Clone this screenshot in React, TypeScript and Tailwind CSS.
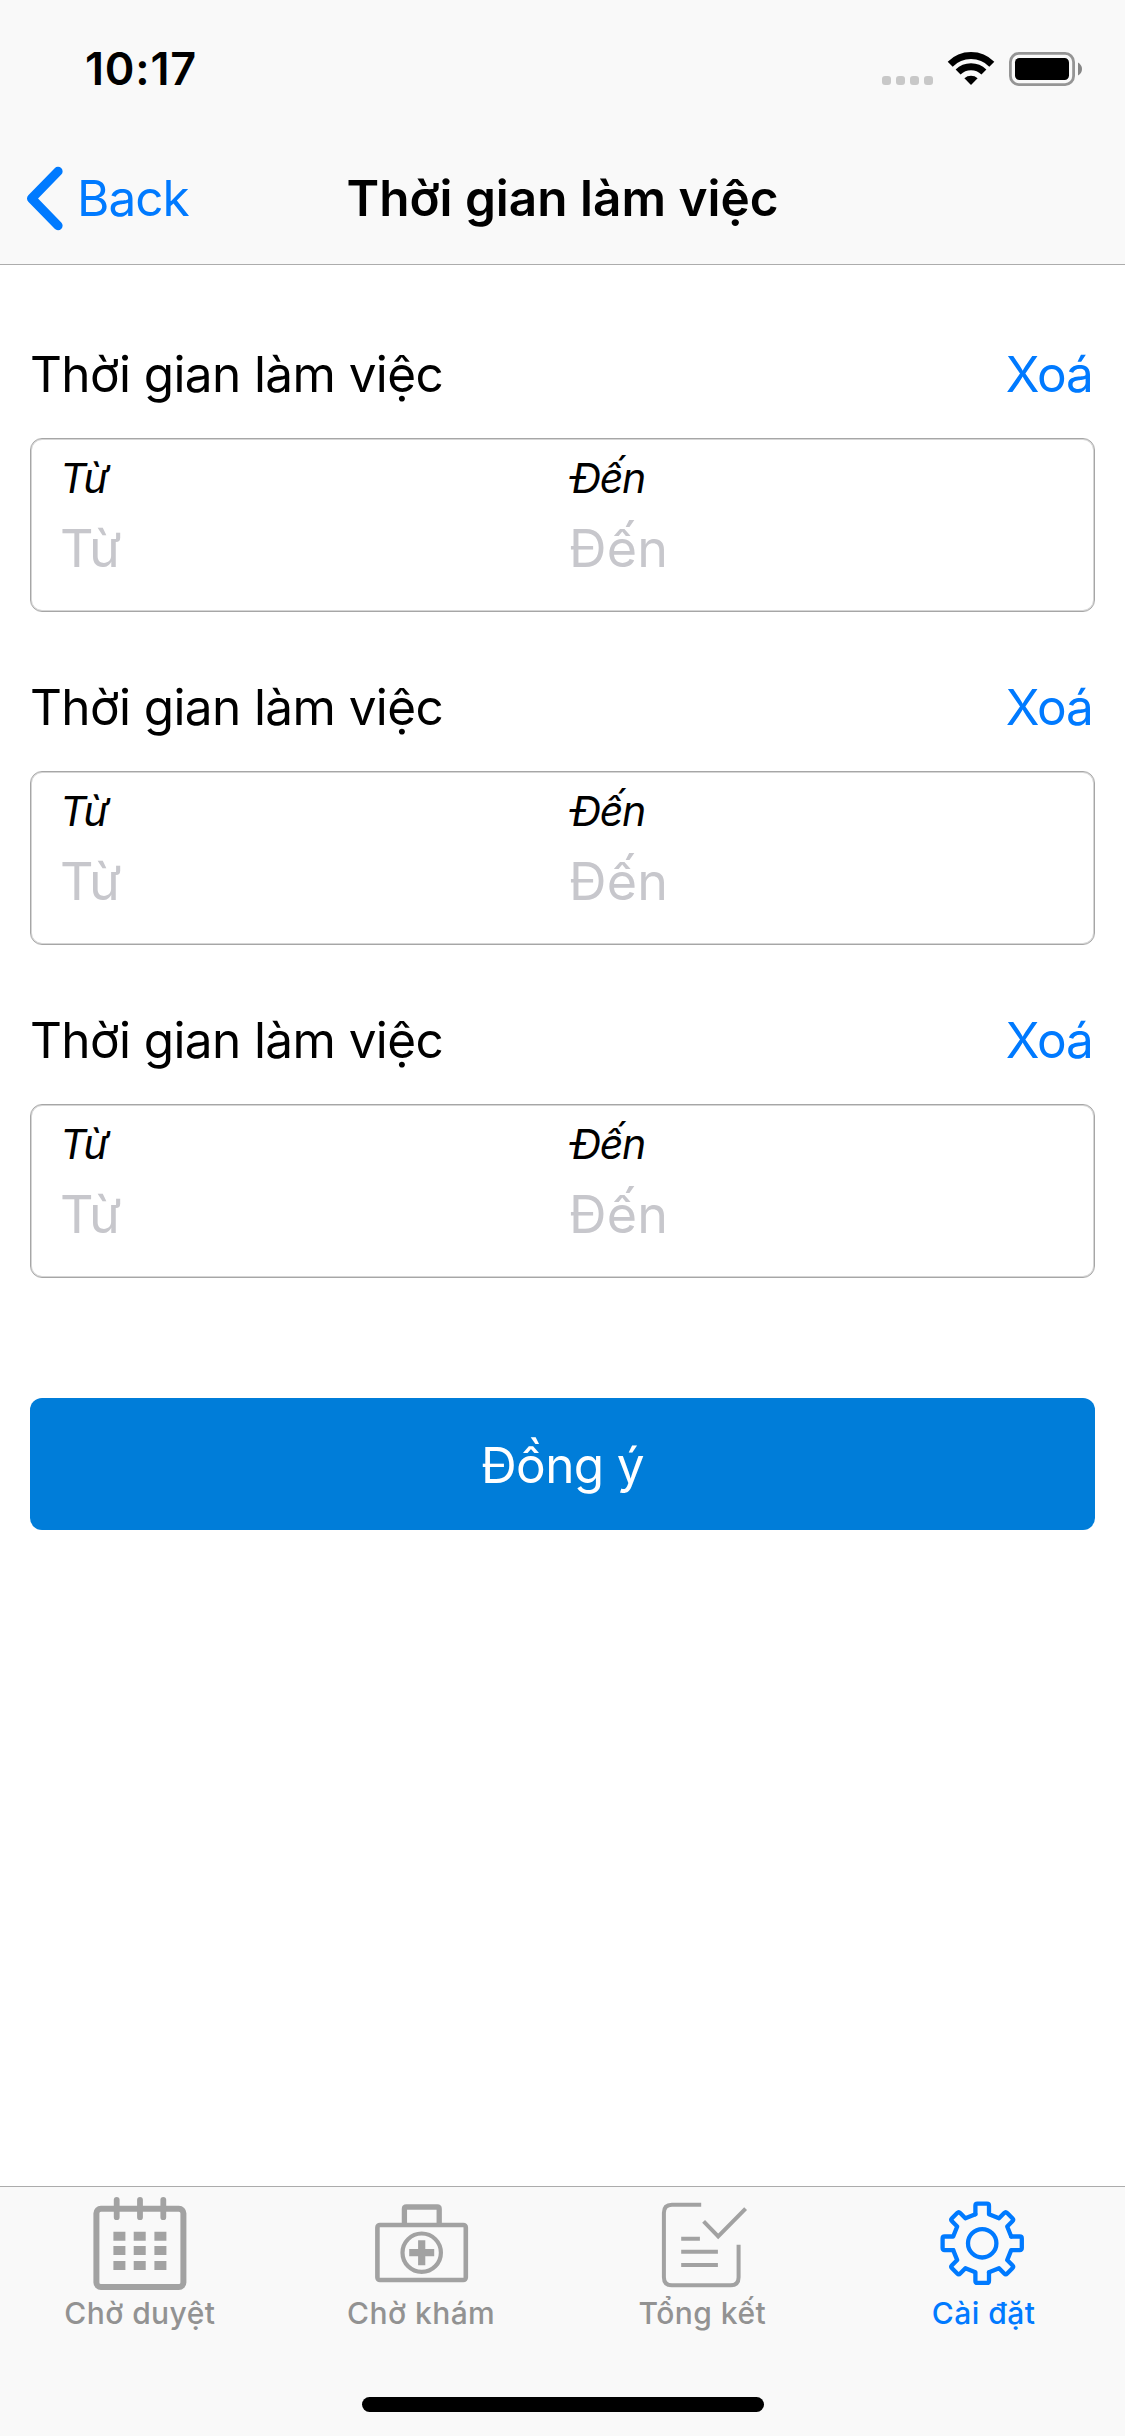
import type { ReactNode } from "react";

function StatusBar() {
  return (
    <div className="flex h-[132px] justify-between pl-[85px]">
      <span className="mt-[42px] text-[45px] leading-[54px] font-semibold tracking-[0.8px]">10:17</span>
      <svg className="mt-[48px] mr-[41px] h-[42px] w-[204px]" viewBox="0 0 204 42" fill="none">
        <g fill="#c8c8c8">
          <rect x="2" y="28" width="9" height="9" rx="3" />
          <rect x="16" y="28" width="9" height="9" rx="3" />
          <rect x="30" y="28" width="9" height="9" rx="3" />
          <rect x="44" y="28" width="9" height="9" rx="3" />
        </g>
        <g stroke="#000">
          <path d="M70.2 16.2 A29.2 29.2 0 0 1 111.8 16.2" strokeWidth="7" />
          <path d="M78.1 24.1 A18.3 18.3 0 0 1 103.9 24.1" strokeWidth="7" />
        </g>
        <path d="M84.4 30.3 A10 10 0 0 1 97.6 30.3 L91.5 36.5 Q91 37 90.5 36.5 Z" fill="#000" />
        <rect x="130.4" y="5.4" width="63.2" height="31.2" rx="8.5" stroke="#959595" strokeWidth="2.8" />
        <rect x="135" y="10" width="54" height="22" rx="4.5" fill="#000" />
        <path d="M198 14.5 Q202 17 202 21 Q202 25 198 27.5 Z" fill="#868686" />
      </svg>
    </div>
  );
}

function NavBar() {
  return (
    <div className="grid h-[132px] grid-cols-[1fr_auto_1fr] items-center text-[49.5px] leading-[60px]">
      <div className="flex items-center pl-[23px] text-[#007aff]">
        <svg className="h-[68px] w-[44px]" viewBox="0 0 44 68" fill="none" stroke="currentColor" strokeWidth="9.2" strokeLinecap="round">
          <path d="M35 7.4 L8.6 34.5 L35 61.6" strokeLinejoin="round" />
        </svg>
        <span className="ml-[10px] tracking-[-1px]">Back</span>
      </div>
      <h1 className="font-semibold">Thời gian làm việc</h1>
    </div>
  );
}

function TimeField({ label, shift }: { label: string; shift?: boolean }) {
  return (
    <div className="flex-1">
      <div className={`text-[41px] leading-[50px] italic ${shift ? "pl-[2px] tracking-[-1.3px]" : "tracking-[-0.3px]"}`}>{label}</div>
      <div className={`mt-[14px] text-[52px] leading-[64px] text-[#c7c7cc] ${shift ? "tracking-[0.2px]" : "tracking-[-0.7px]"}`}>{label}</div>
    </div>
  );
}

function WorkingHours() {
  return (
    <section>
      <div className="flex justify-between pr-[32.5px] pl-[30px] text-[49.5px] leading-[60px]">
        <span className="tracking-[-0.6px]">Thời gian làm việc</span>
        <span className="tracking-[-1.2px] text-[#007aff]">Xoá</span>
      </div>
      <div className="mx-[30px] mt-[34px] flex h-[174px] rounded-xl border border-[#a6a6a6] pt-[14px] pl-[29px] shadow-[inset_0_0_0_1px_#d6d6d6]">
        <TimeField label="Từ" />
        <TimeField label="Đến" shift />
        <div className="w-[16px]" />
      </div>
    </section>
  );
}

function CalendarIcon() {
  return (
    <g>
      <rect x="5.4" y="16.7" width="87" height="78.3" rx="4.5" strokeWidth="6" />
      <path d="M25.7 7.8 V25.2 M49 7.8 V25.2 M72.3 7.8 V25.2" strokeWidth="5.8" strokeLinecap="round" />
      <path d="M22.4 44.2 h12 M42.7 44.2 h12 M63.4 44.2 h12 M22.4 58.5 h12 M42.7 58.5 h12 M63.4 58.5 h12 M22.4 73.4 h12 M42.7 73.4 h12 M63.4 73.4 h12" strokeWidth="9" />
    </g>
  );
}

function MedkitIcon() {
  return (
    <g>
      <rect x="5.4" y="33" width="88.4" height="55" rx="2.5" strokeWidth="4.6" />
      <path d="M32.4 32 V17 Q32.4 15 34.4 15 H65.2 Q67.2 15 67.2 17 V32" strokeWidth="5.3" />
      <circle cx="49.7" cy="60.7" r="19.2" strokeWidth="4.2" />
      <path d="M37.2 60.7 H62.2 M49.7 48.2 V73.2" strokeWidth="7.2" />
    </g>
  );
}

function ReportIcon() {
  return (
    <g strokeWidth="4">
      <path d="M48.2 12.7 H18.9 Q10.9 12.7 10.9 20.7 V85.3 Q10.9 93.3 18.9 93.3 H77.6 Q85.6 93.3 85.6 85.3 V52.7" />
      <path d="M50.6 29.3 L65.2 44.3 L92.6 16.7" />
      <path d="M28.2 46.7 H46.9 M28.2 59.7 H64.9 M28.2 73 H64.9" />
    </g>
  );
}

const GEAR_QUARTER =
  "M-6.8 -29 V-37.6 Q-6.8 -39.6 -4.8 -39.6 H4.8 Q6.8 -39.6 6.8 -37.6 V-29 L16.8 -25 L22 -30.2 Q23.5 -31.7 25 -30.2 L30.2 -25 Q31.7 -23.5 30.2 -22 L25 -16.8 L29 -6.8";

function GearIcon() {
  return (
    <g transform="translate(48.2 51.3)" strokeWidth="4.3" strokeLinecap="round" strokeLinejoin="round">
      <circle r="14.2" />
      <path d={GEAR_QUARTER} />
      <path d={GEAR_QUARTER} transform="rotate(90)" />
      <path d={GEAR_QUARTER} transform="rotate(180)" />
      <path d={GEAR_QUARTER} transform="rotate(270)" />
    </g>
  );
}

function Tab({ label, icon, active }: { label: string; icon: ReactNode; active?: boolean }) {
  return (
    <div className={`flex flex-1 flex-col items-center pt-[5px] ${active ? "text-[#007aff]" : "text-[#929292]"}`}>
      <svg className="h-[103px] w-[100px]" viewBox="0 0 100 103" fill="none" stroke={active ? "#007aff" : "#a2a2a2"}>
        {icon}
      </svg>
      <span className="pr-[1.5px] text-[30px] leading-[36px] font-medium tracking-[0.45px]">{label}</span>
    </div>
  );
}

export default function App() {
  return (
    <div className="flex h-[2436px] w-[1125px] flex-col bg-white font-['Inter',sans-serif] text-black">
      <header className="h-[265px] border-b border-[#acacac] bg-[#f9f9f9]">
        <StatusBar />
        <NavBar />
      </header>

      <main className="flex-1 pt-[79px]">
        <div className="flex flex-col gap-[65px]">
          <WorkingHours />
          <WorkingHours />
          <WorkingHours />
        </div>
        <button className="mx-[30px] mt-[120px] block h-[132px] w-[1065px] rounded-xl bg-[#007dd9] pt-[2px] text-[49.5px] leading-[60px] tracking-[-0.6px] text-white">
          Đồng ý
        </button>
      </main>

      <footer className="flex h-[250px] flex-col justify-between border-t border-[#acacac] bg-[#f9f9f9] pb-[24px]">
        <nav className="flex">
          <Tab label="Chờ duyệt" icon={<CalendarIcon />} />
          <Tab label="Chờ khám" icon={<MedkitIcon />} />
          <Tab label="Tổng kết" icon={<ReportIcon />} />
          <Tab label="Cài đặt" icon={<GearIcon />} active />
        </nav>
        <div className="mx-auto h-[15px] w-[402px] rounded-full bg-black" />
      </footer>
    </div>
  );
}
